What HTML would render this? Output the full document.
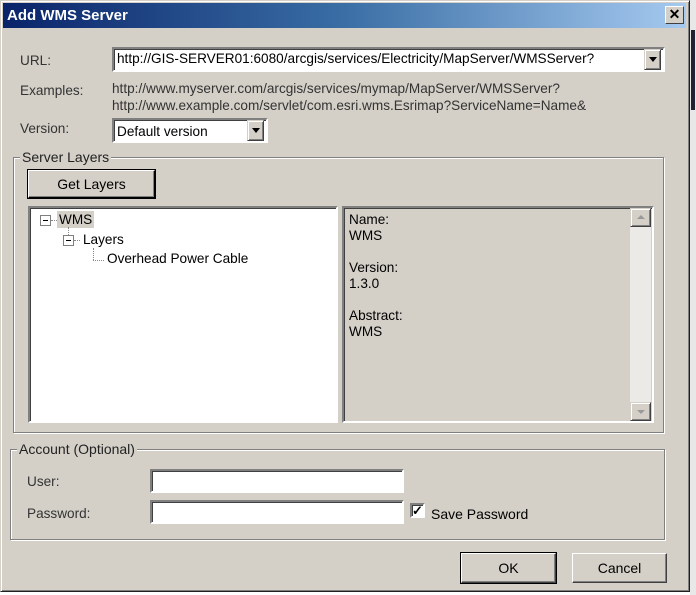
<!DOCTYPE html>
<html><head><style>
*{box-sizing:border-box;margin:0;padding:0}
body{width:696px;height:595px;background:#fff;font-family:"Liberation Sans",sans-serif;font-size:13.6px;color:#000;position:relative;overflow:hidden}
.a{position:absolute}
.win{left:0;top:0;width:690px;height:592px;background:#d4d0c8;border:1px solid #202020;border-top-color:#d4d0c8;border-left-color:#d4d0c8;box-shadow:inset 1px 1px 0 #fff,inset -1px -1px 0 #808080}
.title{left:3px;top:3px;width:683px;height:25px;background:linear-gradient(to right,#0a246a,#3a6ea5 50%,#a6caf0);color:#fff;font-weight:bold;font-size:15px;padding:4px 4px}
.close{left:665px;top:6px;width:19px;height:18px;background:#d4d0c8;border:1px solid;border-color:#fff #404040 #404040 #fff;font-size:14px;font-weight:bold;text-align:center;line-height:15px;color:#000}
.in{background:#fff;border:2px solid;border-color:#808080 #fff #fff #808080;box-shadow:inset 1px 1px 0 #404040}
.btn{background:#d4d0c8;border:1px solid;border-color:#fff #404040 #404040 #fff;box-shadow:inset -1px -1px 0 #808080;text-align:center;font-size:14px}
.grp{border:1px solid #808080;box-shadow:1px 1px 0 #fff,inset 1px 1px 0 #fff}
.lg{background:#d4d0c8;padding:0 2px;font-size:14px;color:#222}
.arr{width:17px;background:#d4d0c8;border:1px solid;border-color:#d4d0c8 #404040 #404040 #d4d0c8;box-shadow:inset 1px 1px 0 #fff,inset -1px -1px 0 #808080}
.tri{position:absolute;left:4px;width:0;height:0;border-left:4px solid transparent;border-right:4px solid transparent}
.g{color:#333}
</style></head><body>
<div class="a win"></div>
<div class="a" style="left:690px;top:0;width:6px;height:595px;background:#e8e8e8"></div>
<div class="a" style="left:691px;top:30px;width:4px;height:80px;background:#223"></div>
<div class="a title">Add WMS Server</div>
<div class="a close">✕</div>

<div class="a g" style="left:20px;top:53px">URL:</div>
<div class="a in" style="left:112px;top:47px;width:553px;height:25px;padding:2px 3px">http://GIS-SERVER01:6080/arcgis/services/Electricity/MapServer/WMSServer?</div>
<div class="a arr" style="left:644px;top:49px;height:21px"><div class="tri" style="top:7px;border-top:5px solid #000"></div></div>

<div class="a g" style="left:20px;top:83px">Examples:</div>
<div class="a g" style="left:112px;top:80px;line-height:17px">http://www.myserver.com/arcgis/services/mymap/MapServer/WMSServer?<br>http://www.example.com/servlet/com.esri.wms.Esrimap?ServiceName=Name&amp;</div>

<div class="a g" style="left:20px;top:121px">Version:</div>
<div class="a in" style="left:112px;top:118px;width:156px;height:25px;padding:4px 3px">Default version</div>
<div class="a arr" style="left:247px;top:120px;height:21px"><div class="tri" style="top:7px;border-top:5px solid #000"></div></div>

<div class="a grp" style="left:13px;top:157px;width:651px;height:276px"></div>
<div class="a lg" style="left:20px;top:149px">Server Layers</div>
<div class="a btn" style="left:28px;top:170px;width:127px;height:28px;border-color:#fff #000 #000 #fff;outline:1px solid #000;padding-top:5px">Get Layers</div>

<div class="a in" style="left:28px;top:206px;width:310px;height:217px"></div>
<div class="a" style="left:40px;top:215px;width:11px;height:11px;border:1px solid #808080;background:#fff"><div style="position:absolute;left:2px;top:4px;width:5px;height:1px;background:#000"></div></div>
<div class="a" style="left:51px;top:220px;width:6px;border-top:1px dotted #888"></div>
<div class="a" style="left:57px;top:211px;background:#d4d0c8;padding:1px 2px">WMS</div>
<div class="a" style="left:68px;top:227px;height:8px;border-left:1px dotted #888"></div>
<div class="a" style="left:63px;top:235px;width:11px;height:11px;border:1px solid #808080;background:#fff"><div style="position:absolute;left:2px;top:4px;width:5px;height:1px;background:#000"></div></div>
<div class="a" style="left:74px;top:240px;width:6px;border-top:1px dotted #888"></div>
<div class="a" style="left:83px;top:232px">Layers</div>
<div class="a" style="left:93px;top:248px;height:12px;border-left:1px dotted #888"></div>
<div class="a" style="left:93px;top:260px;width:11px;border-top:1px dotted #888"></div>
<div class="a" style="left:107px;top:251px">Overhead Power Cable</div>

<div class="a" style="left:342px;top:206px;width:312px;height:217px;border:2px solid;border-color:#808080 #fff #fff #808080;box-shadow:inset 1px 1px 0 #404040"></div>
<div class="a" style="left:349px;top:212px;line-height:16px">Name:<br>WMS<br><br>Version:<br>1.3.0<br><br>Abstract:<br>WMS</div>
<div class="a" style="left:630px;top:208px;width:21px;height:213px;background:#ebeae6"></div>
<div class="a arr" style="left:630px;top:208px;height:19px;width:21px"><div class="tri" style="top:6px;left:6px;border-bottom:4px solid #999"></div></div>
<div class="a arr" style="left:630px;top:402px;height:19px;width:21px"><div class="tri" style="top:7px;left:6px;border-top:4px solid #999"></div></div>

<div class="a grp" style="left:10px;top:449px;width:655px;height:91px"></div>
<div class="a lg" style="left:17px;top:441px">Account (Optional)</div>
<div class="a g" style="left:27px;top:474px">User:</div>
<div class="a in" style="left:150px;top:469px;width:254px;height:24px"></div>
<div class="a g" style="left:27px;top:506px">Password:</div>
<div class="a in" style="left:150px;top:500px;width:254px;height:24px"></div>
<div class="a in" style="left:410px;top:503px;width:15px;height:15px;font-size:13px;line-height:11px;text-align:center;font-weight:bold">✓</div>
<div class="a" style="left:431px;top:506px;font-size:14px">Save Password</div>

<div class="a btn" style="left:461px;top:553px;width:95px;height:30px;outline:1px solid #000;padding-top:6px">OK</div>
<div class="a btn" style="left:572px;top:553px;width:95px;height:30px;padding-top:6px">Cancel</div>
</body></html>
